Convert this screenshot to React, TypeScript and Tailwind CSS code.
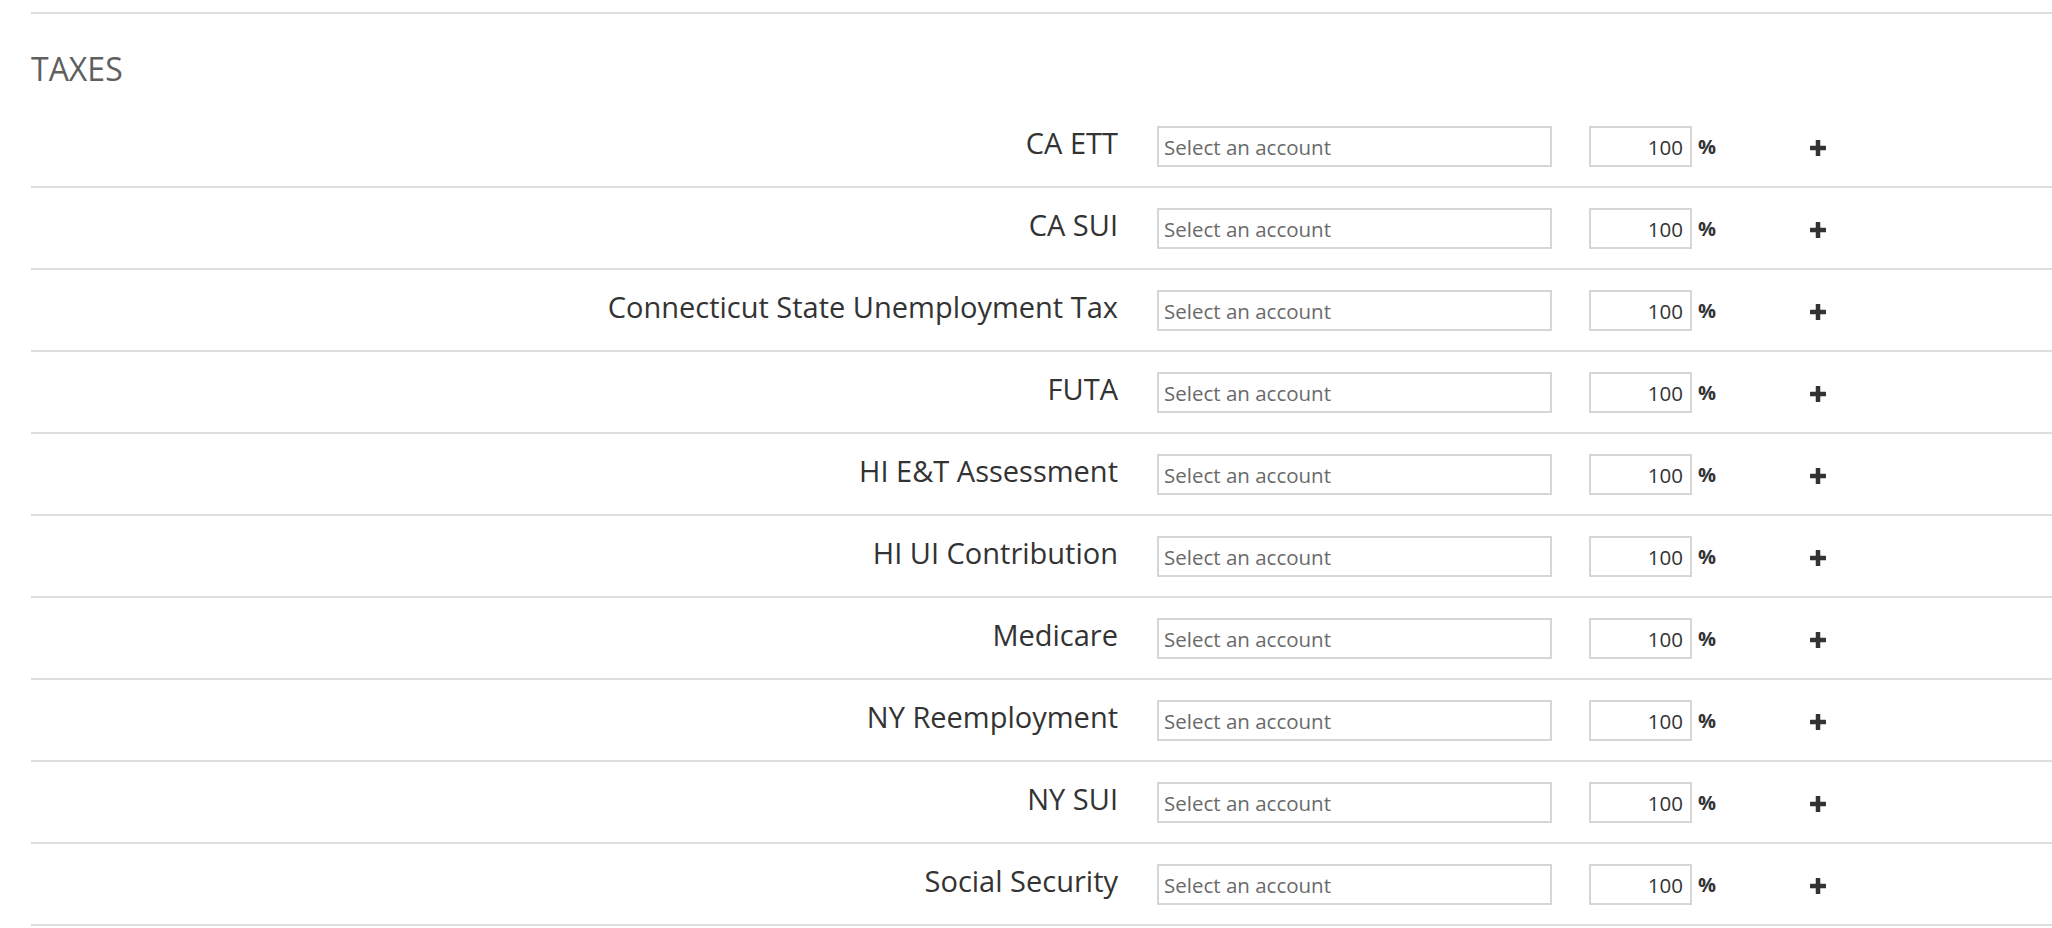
import React from 'react'

const taxes = [
  'CA ETT',
  'CA SUI',
  'Connecticut State Unemployment Tax',
  'FUTA',
  'HI E&T Assessment',
  'HI UI Contribution',
  'Medicare',
  'NY Reemployment',
  'NY SUI',
  'Social Security',
]

const PlusIcon = () => (
  <svg width="16" height="16" viewBox="0 0 16 16" className="text-[#333]">
    <rect x="5.75" y="0" width="4.5" height="16" rx="0.5" fill="currentColor" />
    <rect x="0" y="5.75" width="16" height="4.5" rx="0.5" fill="currentColor" />
  </svg>
)

const TaxRow = ({ name }: { name: string }) => (
  <div className="flex h-[82px] items-center border-b-2 border-[#dedede]">
    <div className="mb-[6px] w-[1087px] shrink-0 text-right text-[29px] leading-[38px] text-[#333]">
      {name}
    </div>
    <input
      className="ml-[39px] h-[41px] w-[395px] shrink-0 border-2 border-[#d6d6d6] bg-white px-[5px] pt-[2px] text-[20.5px] text-[#555] outline-none placeholder:text-[#6a6a6a]"
      placeholder="Select an account"
      readOnly
    />
    <input
      className="ml-[37px] h-[41px] w-[103px] shrink-0 border-2 border-[#d6d6d6] bg-white pr-[7px] pt-[2px] text-right text-[20.5px] text-[#333] outline-none"
      defaultValue="100"
    />
    <span className="ml-[6px] mt-[2px] w-[110px] shrink-0 text-[20px] font-bold text-[#333]">%</span>
    <button className="mt-[4px] flex h-[20px] w-[20px] items-center justify-center">
      <PlusIcon />
    </button>
  </div>
)

export default function App() {
  return (
    <div className="min-h-[928px] bg-white pl-[31px] pt-[12px] font-['Open_Sans',sans-serif]">
      <div className="border-t-2 border-[#dedede]">
        <h2 className="h-[92px] pt-[33px] text-[32px] leading-[44px] text-[#5f5f5f]">TAXES</h2>
        {taxes.map((t) => (
          <TaxRow key={t} name={t} />
        ))}
      </div>
    </div>
  )
}
